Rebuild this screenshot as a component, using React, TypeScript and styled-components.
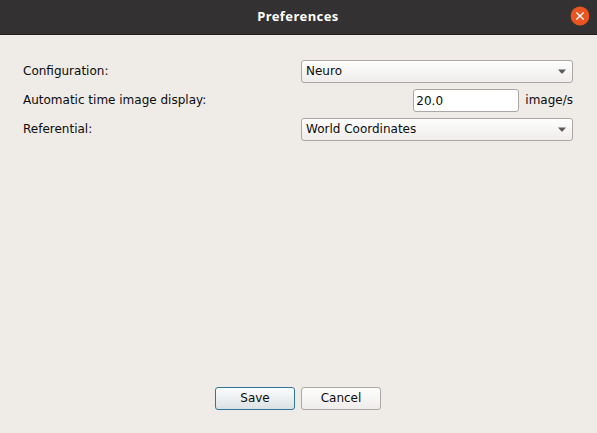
import React from 'react';
import styled, { createGlobalStyle } from 'styled-components';

const GlobalStyle = createGlobalStyle`
  * { box-sizing: border-box; }
  body { margin: 0; background: #efebe7; }
`;

const Dialog = styled.div`
  width: 597px;
  height: 433px;
  display: flex;
  flex-direction: column;
  background: #efebe7;
  color: #0c0c0c;
  font: 12px/15px "DejaVu Sans", sans-serif;
`;

const TitleBar = styled.header`
  height: 35px;
  flex: none;
  display: grid;
  grid-template-columns: 1fr auto 1fr;
  align-items: center;
  padding: 0 7px 2px 6px;
  background: #333132;
  border-bottom: 1px solid #211e1e;
`;

const Title = styled.h1`
  grid-column: 2;
  margin: 0;
  color: #fff;
  font: bold 13px/18px "Noto Sans", sans-serif;
  letter-spacing: 0.42px;
`;

const CloseButton = styled.button`
  justify-self: end;
  width: 20px;
  height: 20px;
  padding: 0;
  border: 0;
  background: none;
  svg { display: block; }
`;

const Form = styled.main`
  flex: 1;
  display: flex;
  flex-direction: column;
  gap: 6px;
  padding: 25px 24px 0 23px;
`;

const Row = styled.div`
  height: 23px;
  display: flex;
  align-items: center;
  justify-content: space-between;
  white-space: nowrap;
`;

const Label = styled.label``;

const Select = styled.div`
  width: 272px;
  height: 23px;
  display: flex;
  align-items: center;
  justify-content: space-between;
  padding: 0 6px 0 4px;
  border: 1px solid #aca7a4;
  border-radius: 3px;
  background: linear-gradient(#fefefe, #efedeb);
`;

const Field = styled.div`
  display: flex;
  align-items: center;
  gap: 6px;
`;

const Input = styled.input`
  width: 106px;
  height: 23px;
  padding: 0 2px;
  border: 1px solid #aca7a4;
  border-radius: 3px;
  background: #fff;
  color: inherit;
  font: inherit;
  outline: none;
`;

const Actions = styled.footer`
  display: flex;
  gap: 6px;
  padding: 0 0 23px 215px;
`;

const Button = styled.button<{ $primary?: boolean }>`
  width: 80px;
  height: 23px;
  padding: 0;
  border: 1px solid ${p => (p.$primary ? '#2e76a0' : '#aca7a4')};
  border-radius: 3px;
  background: ${p => (p.$primary
    ? 'linear-gradient(#fcfdfd, #dbe1e4)'
    : 'linear-gradient(#fefefe, #efedeb)')};
  color: inherit;
  font: inherit;
`;

const Arrow = () => (
  <svg width="8" height="5" viewBox="0 0 8 5">
    <path d="M0 .5h8L4.5 4.5h-1z" fill="#5c5b59" />
  </svg>
);

export default function App() {
  return (
    <Dialog>
      <GlobalStyle />
      <TitleBar>
        <Title>Preferences</Title>
        <CloseButton aria-label="Close">
          <svg width="20" height="20" viewBox="0 0 20 20">
            <circle cx="10" cy="10" r="9.4" fill="#e95420" />
            <path d="M6.4 6.4l7.2 7.2M13.6 6.4l-7.2 7.2" stroke="#fff" strokeWidth="1.4" />
          </svg>
        </CloseButton>
      </TitleBar>
      <Form>
        <Row>
          <Label>Configuration:</Label>
          <Select>Neuro<Arrow /></Select>
        </Row>
        <Row>
          <Label>Automatic time image display:</Label>
          <Field>
            <Input defaultValue="20.0" />
            <span>image/s</span>
          </Field>
        </Row>
        <Row>
          <Label>Referential:</Label>
          <Select>World Coordinates<Arrow /></Select>
        </Row>
      </Form>
      <Actions>
        <Button $primary>Save</Button>
        <Button>Cancel</Button>
      </Actions>
    </Dialog>
  );
}
